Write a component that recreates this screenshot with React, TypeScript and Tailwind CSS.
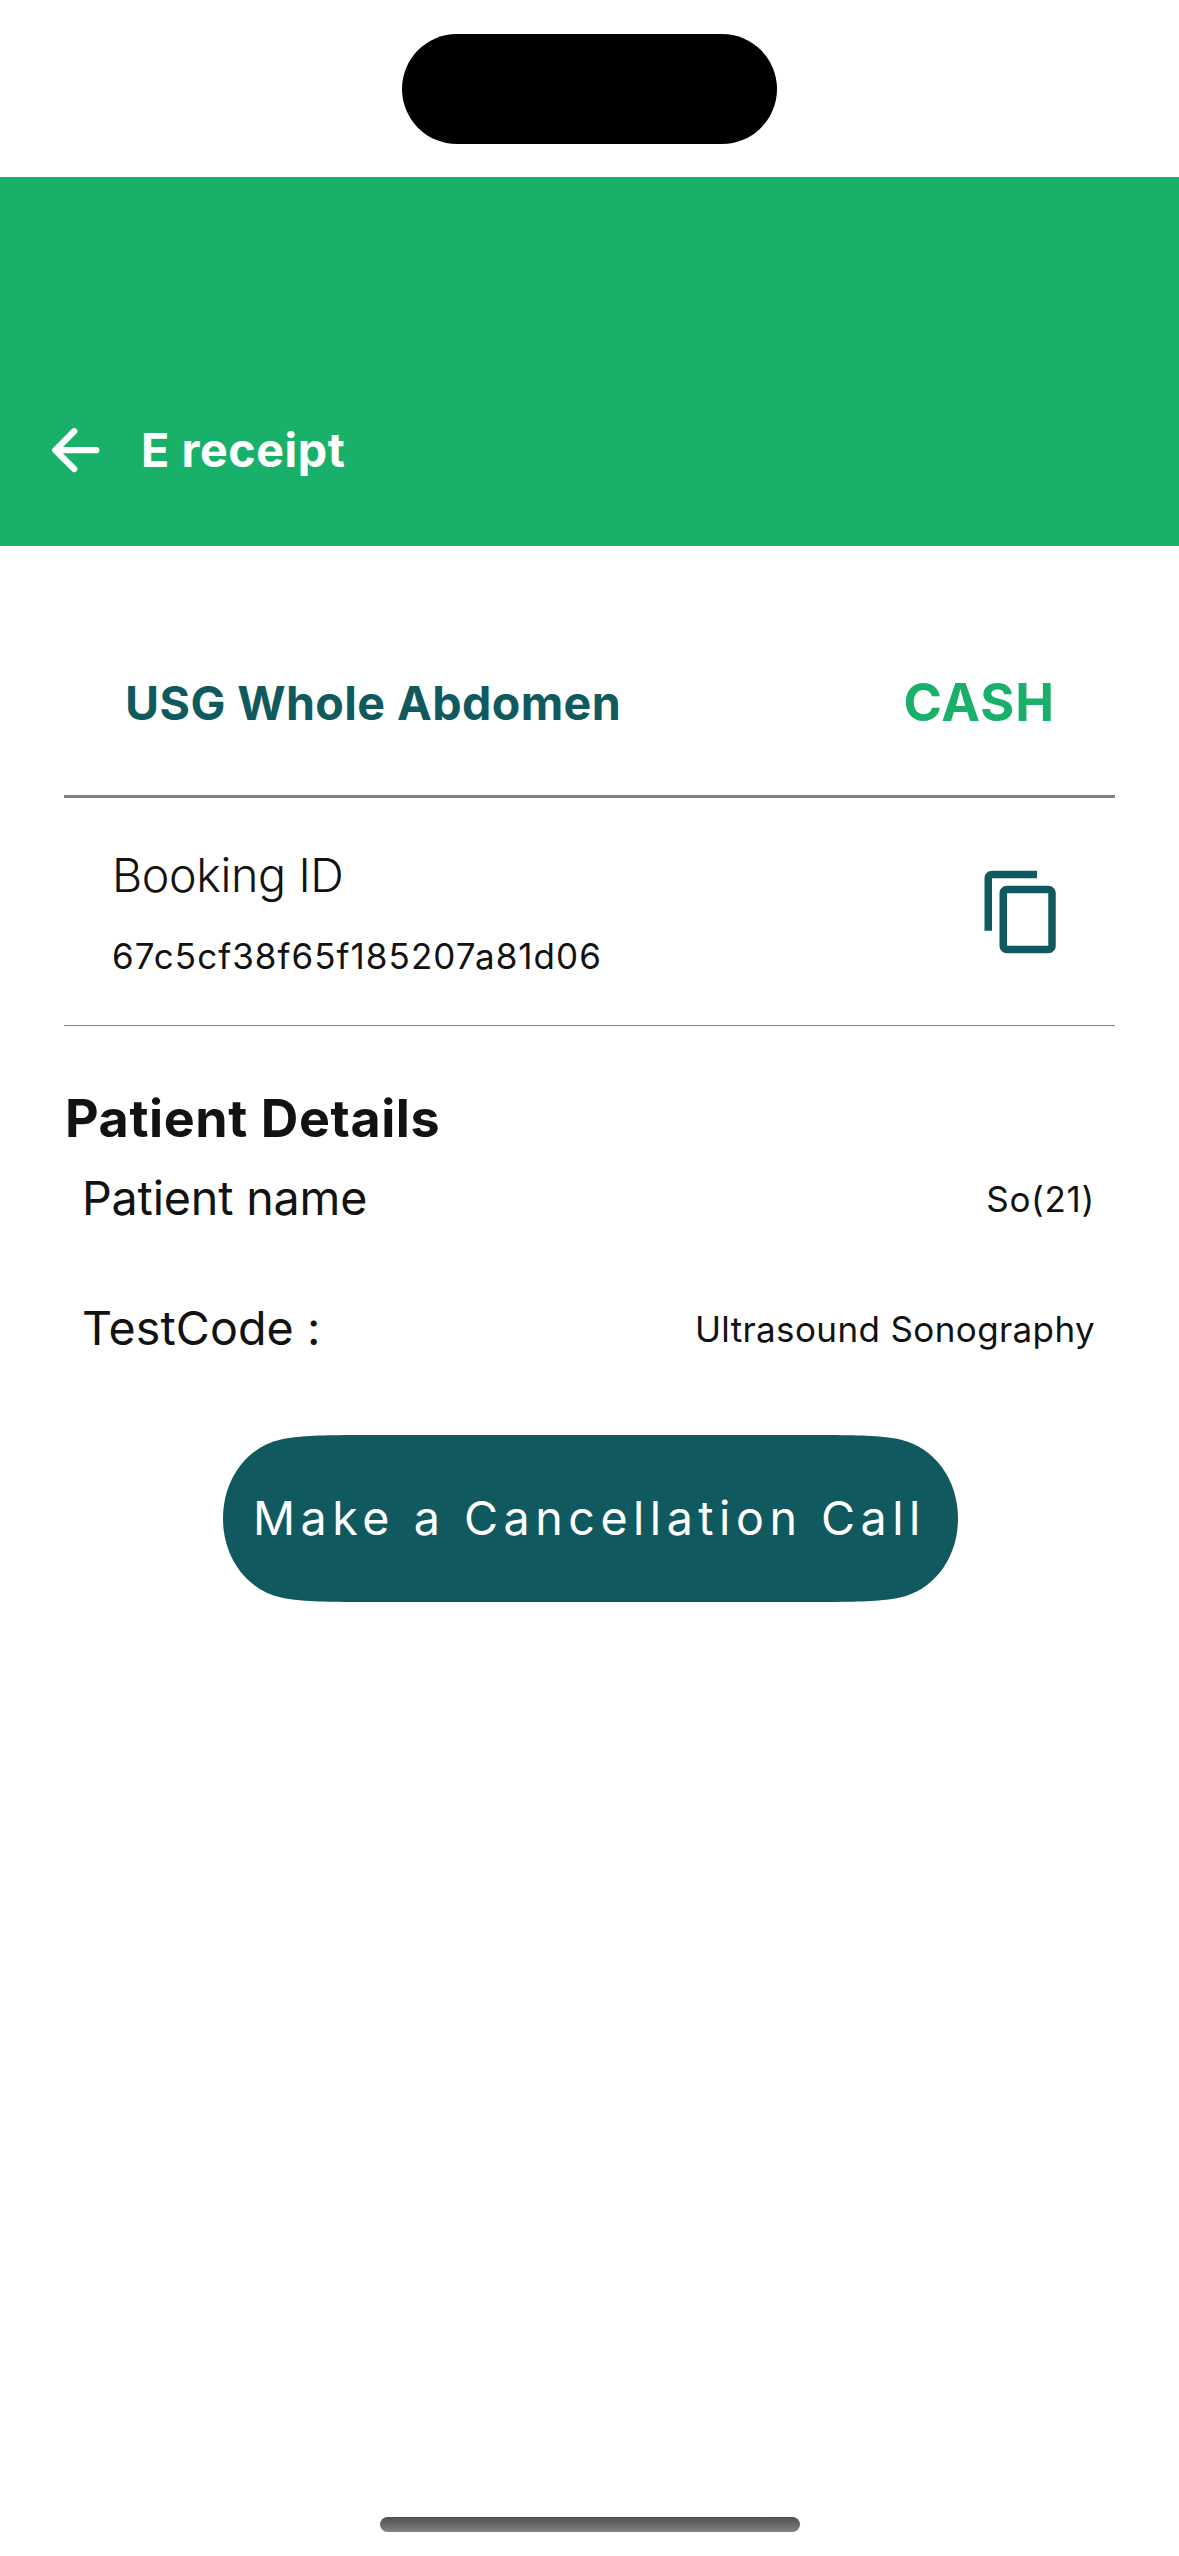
import { MdContentCopy } from "react-icons/md";

function BackArrow() {
  return (
    <svg
      className="h-[70px] w-[70px]"
      viewBox="0 0 70 70"
      fill="none"
      stroke="currentColor"
      strokeWidth="6.3"
      strokeLinecap="round"
      strokeLinejoin="round"
    >
      <path d="M34.2 16.3 15.3 35.2 34.2 54.1M16 35.2H56.2" />
    </svg>
  );
}

function StatusArea() {
  return (
    <div className="flex h-[177px] justify-center pt-[34px]">
      <div className="h-[110px] w-[375px] rounded-full bg-black" />
    </div>
  );
}

function Header() {
  return (
    <header className="flex h-[369px] items-end bg-[#19b169] pb-[61px] pl-10 text-white">
      <button aria-label="Back" className="block">
        <BackArrow />
      </button>
      <h1 className="pl-[31px] text-[46.6px] leading-[70px] font-bold tracking-[0.58px]">
        E receipt
      </h1>
    </header>
  );
}

export default function App() {
  return (
    <div className="flex h-[2556px] w-[1179px] flex-col bg-white font-[Inter,sans-serif] text-[#121212]">
      <StatusArea />
      <Header />

      <main className="flex flex-1 flex-col px-16 pt-[127px]">
        <div className="flex h-[60px] items-center justify-between pr-[60px] pl-[61px] font-bold">
          <h2 className="text-[46.6px] leading-[60px] tracking-[0.4px] text-[#105a5f]">
            USG Whole Abdomen
          </h2>
          <span className="text-[52px] leading-[60px] tracking-[0.9px] text-[#19b169]">CASH</span>
        </div>
        <div className="mt-[62px] h-[3px] bg-[#808080]" />

        <section className="flex h-[227px] justify-between px-12">
          <div className="flex flex-col pt-[47px]">
            <span className="text-[46.6px] leading-[60px] font-light tracking-[-0.4px]">
              Booking ID
            </span>
            <span className="mt-[26px] text-[35px] leading-[50px] tracking-[1.04px]">
              67c5cf38f65f185207a81d06
            </span>
          </div>
          <button aria-label="Copy booking ID" className="mt-[68.5px] h-[90px] w-[90px] text-[#105a5f]">
            <MdContentCopy className="h-[90px] w-[90px]" />
          </button>
        </section>
        <div className="h-px bg-[#808080]" />

        <section>
          <h2 className="mt-[63px] pl-px text-[52px] leading-[60px] font-bold tracking-[0.59px]">
            Patient Details
          </h2>
          <div className="mt-[19px] flex flex-col gap-[70px]">
            <div className="flex h-[60px] items-center justify-between pr-5 pl-[18px]">
              <span className="text-[46.6px] leading-[60px] tracking-[-0.16px]">Patient name</span>
              <span className="pt-[3px] text-[35px] leading-[57px] tracking-[0.7px]">So(21)</span>
            </div>
            <div className="flex h-[60px] items-center justify-between pr-5 pl-[18px]">
              <span className="text-[46.6px] leading-[60px] tracking-[0.09px]">TestCode :</span>
              <span className="pt-[3px] text-[35px] leading-[57px] tracking-[0.38px]">
                Ultrasound Sonography
              </span>
            </div>
          </div>
        </section>

        <button className="mt-[77px] ml-[159px] h-[167px] w-[735px] bg-[#105a5f] pl-[30px] text-left text-[46.6px] leading-[167px] tracking-[5.52px] whitespace-nowrap text-white [clip-path:path('M127.6,0C95,0.3,75,0.9,58,4.5C24,12,0,44,0,83.5C0,123,24,155,58,162.5C75,166.1,95,166.7,127.6,167H607.4C640,166.7,660,166.1,677,162.5C711,155,735,123,735,83.5C735,44,711,12,677,4.5C660,0.9,640,0.3,607.4,0Z')]">
          Make a Cancellation Call
        </button>
      </main>

      <div className="flex justify-center pb-6">
        <div className="h-[15px] w-[420px] rounded-full bg-gradient-to-b from-[#505050] to-[#828282]" />
      </div>
    </div>
  );
}
